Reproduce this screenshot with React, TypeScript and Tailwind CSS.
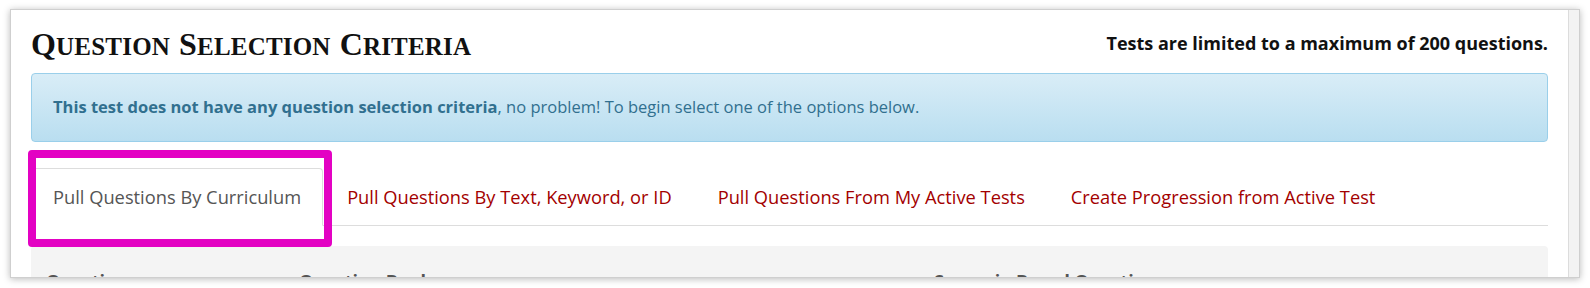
const TABS = [
  "Pull Questions By Text, Keyword, or ID",
  "Pull Questions From My Active Tests",
  "Create Progression from Active Test",
];

const TITLE = ["Question", "Selection", "Criteria"];

export default function App() {
  return (
    <div className="w-[1590px] h-[288px] bg-white overflow-hidden pt-[9px] pl-[10px] font-['Open_Sans',sans-serif]">
      <div className="w-[1570px] h-[269px] flex border border-[#cfcfcf] bg-white shadow-[0_1px_7px_rgba(0,0,0,0.28)] overflow-hidden">
        {/* page body */}
        <div className="flex-1 px-[20px] pt-[14px] overflow-hidden">
          <div className="flex items-center justify-between h-[39px]">
            <h2 className="flex gap-[9px] font-['Liberation_Serif',serif] font-bold leading-none text-[#111] tracking-[0.2px]">
              {TITLE.map((w) => (
                <span key={w}>
                  <span className="text-[32px]">{w[0]}</span>
                  <span className="text-[25px] uppercase">{w.slice(1)}</span>
                </span>
              ))}
            </h2>
            <span className="text-[18px] font-bold text-[#111]">
              Tests are limited to a maximum of 200 questions.
            </span>
          </div>

          <div className="mt-[10px] h-[69px] flex items-center px-[21px] rounded-[4px] border border-[#9acfea] bg-gradient-to-b from-[#d9edf7] to-[#b9def0] text-[#31708f] text-[16.5px]">
            <p>
              <b>This test does not have any question selection criteria</b>, no problem! To
              begin select one of the options below.
            </p>
          </div>

          {/* tabs */}
          <div className="relative mt-[26px] flex border-b border-[#dddddd] text-[18.3px]">
            <div className="-mb-px mr-[2px] h-[58px] flex items-center px-[21px] bg-white border border-[#dddddd] border-b-transparent rounded-t-[4px] text-[#555]">
              Pull Questions By Curriculum
            </div>
            {TABS.map((t) => (
              <div key={t} className="mr-[2px] h-[57px] flex items-center px-[22px] text-[#a30000]">
                {t}
              </div>
            ))}
            {/* highlight annotation */}
            <div className="absolute left-[-3px] top-[-18px] w-[304px] h-[97px] border-[8px] border-[#e302c3] rounded-[4px]" />
          </div>

          <div className="mt-[20px] h-[60px] bg-[#f4f4f4] rounded-t-[4px] px-[15px] pt-[22px] flex text-[18px] font-bold text-[#555]">
            <span className="w-[253px]">Questions</span>
            <span className="w-[635px]">Question Bank</span>
            <span>Scenario Based Questions</span>
          </div>
        </div>

        {/* scrollbar track */}
        <div className="w-[11px] bg-[#f3f3f3] border-l border-[#dcdcdc]" />
      </div>
    </div>
  );
}
